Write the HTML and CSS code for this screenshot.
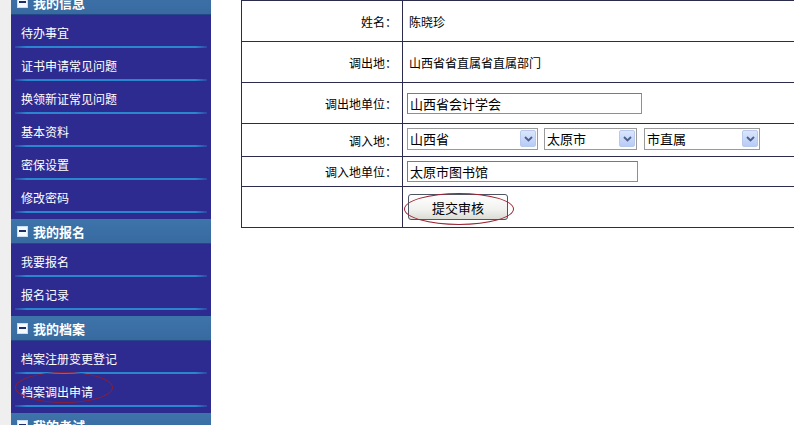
FILE: index.html
```html
<!DOCTYPE html>
<html lang="zh-CN">
<head>
<meta charset="utf-8">
<title>档案调出申请</title>
<link rel="stylesheet" href="styles.css">
</head>
<body>
<div class="page">
  <aside class="sidebar">
    <div class="group">
      <div class="group-head"><span class="minus"></span>我的信息</div>
      <a class="item">待办事宜</a>
      <a class="item">证书申请常见问题</a>
      <a class="item">换领新证常见问题</a>
      <a class="item">基本资料</a>
      <a class="item">密保设置</a>
      <a class="item">修改密码</a>
    </div>
    <div class="group">
      <div class="group-head"><span class="minus"></span>我的报名</div>
      <a class="item">我要报名</a>
      <a class="item">报名记录</a>
    </div>
    <div class="group">
      <div class="group-head"><span class="minus"></span>我的档案</div>
      <a class="item">档案注册变更登记</a>
      <a class="item item-marked">档案调出申请<span class="ring ring-side"></span></a>
    </div>
    <div class="group">
      <div class="group-head"><span class="minus"></span>我的考试</div>
    </div>
  </aside>

  <main class="content">
    <div class="form">
      <div class="label">姓名：</div>
      <div class="value"><span class="text">陈晓珍</span></div>

      <div class="label">调出地：</div>
      <div class="value"><span class="text">山西省省直属省直属部门</span></div>

      <div class="label">调出地单位：</div>
      <div class="value"><span class="input input-wide">山西省会计学会</span></div>

      <div class="label">调入地：</div>
      <div class="value selects">
        <span class="select sel-1"><span class="sel-text">山西省</span><span class="arrow"><svg width="9" height="6" viewBox="0 0 9 6"><path d="M1 1 L4.5 4.5 L8 1" fill="none" stroke="#4a5f8c" stroke-width="1.8"/></svg></span></span>
        <span class="select sel-2"><span class="sel-text">太原市</span><span class="arrow"><svg width="9" height="6" viewBox="0 0 9 6"><path d="M1 1 L4.5 4.5 L8 1" fill="none" stroke="#4a5f8c" stroke-width="1.8"/></svg></span></span>
        <span class="select sel-3"><span class="sel-text">市直属</span><span class="arrow"><svg width="9" height="6" viewBox="0 0 9 6"><path d="M1 1 L4.5 4.5 L8 1" fill="none" stroke="#4a5f8c" stroke-width="1.8"/></svg></span></span>
      </div>

      <div class="label">调入地单位：</div>
      <div class="value"><span class="input input-mid">太原市图书馆</span></div>

      <div class="label"></div>
      <div class="value">
        <span class="btn-wrap"><button class="btn" type="button">提交审核</button><span class="ring ring-btn"></span></span>
      </div>
    </div>
  </main>
</div>
</body>
</html>
```

FILE: styles.css
```css
html, body {
  margin: 0;
  padding: 0;
  background: #ffffff;
  overflow: hidden;
}

body {
  font-family: "Noto Sans CJK SC", "Liberation Sans", sans-serif;
  font-size: 12px;
  color: #000;
}

.page {
  display: flex;
  align-items: flex-start;
  gap: 30px;
  width: 794px;
  height: 443px;
}

/* ---------- sidebar ---------- */
.sidebar {
  width: 200px;
  height: 435px;
  margin-top: -10px;
  border-left: 11px solid #efefef;
  background: #2e2b90;
  overflow: hidden;
  flex: none;
}

.group {
  display: flex;
  flex-direction: column;
  padding-bottom: 6px;
}

.group-head {
  height: 25px;
  box-sizing: border-box;
  display: flex;
  align-items: center;
  gap: 5px;
  padding-left: 6px;
  background: linear-gradient(#3d74aa, #386aa0);
  border-bottom: 1px solid #24478a;
  color: #ffffff;
  font-weight: bold;
  font-size: 13px;
}

.minus {
  width: 11px;
  height: 11px;
  box-sizing: border-box;
  background: #f4f8ff;
  border: 1px solid #c8dcf4;
  display: flex;
  align-items: center;
  justify-content: center;
}

.minus::before {
  content: "";
  width: 7px;
  height: 2px;
  background: #1d2d6a;
}

.item {
  position: relative;
  display: block;
  height: 33px;
  box-sizing: border-box;
  padding: 4px 0 0 10px;
  line-height: 27px;
  color: #ffffff;
  font-size: 12px;
  text-decoration: none;
  background: linear-gradient(to right, rgba(40,130,205,0.3), #2b86d0 6%, #2b86d0 94%, rgba(40,130,205,0.3)) no-repeat 4px 31px / 192px 2px;
}

.ring {
  position: absolute;
  border: 1px solid #9c2433;
  border-radius: 50%;
  pointer-events: none;
}

.ring-side {
  left: 4px;
  top: -2px;
  width: 96px;
  height: 29px;
  border-color: #8a1e34;
}

/* ---------- form ---------- */
.content {
  flex: none;
  width: 553px;
}

.form {
  display: grid;
  grid-template-columns: 162px 1fr;
  grid-template-rows: 41px 41px 41px 33px 30px 41px;
  border-top: 1px solid #2b2b4d;
}

.label, .value {
  box-sizing: border-box;
  border-bottom: 1px solid #2b2b4d;
  display: flex;
  align-items: center;
}

.label {
  border-left: 1px solid #2b2b4d;
  border-right: 1px solid #2b2b4d;
  justify-content: flex-end;
  padding-right: 5px;
}

.value {
  padding-left: 4px;
}

.text {
  padding-left: 2px;
}

.input {
  height: 21px;
  box-sizing: border-box;
  border: 1px solid #8f8f8f;
  border-top-color: #7a7a7a;
  border-left-color: #7a7a7a;
  padding: 0 2px;
  font-size: 13px;
  line-height: 19px;
  background: #fff;
}

.input-wide { width: 235px; }
.input-mid { width: 231px; }

.selects {
  gap: 6px;
  padding-bottom: 3px;
}

.select {
  height: 22px;
  box-sizing: border-box;
  border: 1px solid #9a9a9a;
  display: flex;
  align-items: center;
  justify-content: space-between;
  padding: 0 1px 0 2px;
  background: #fff;
  font-size: 13px;
}

.sel-1 { width: 131px; }
.sel-2 { width: 93px; }
.sel-3 { width: 116px; margin-left: 1px; }

.arrow {
  width: 16px;
  height: 17px;
  box-sizing: border-box;
  border: 1px solid #b8c9ee;
  border-radius: 2px;
  background: linear-gradient(#dbe6fd, #b7cbf5);
  display: flex;
  align-items: center;
  justify-content: center;
}

.btn-wrap {
  position: relative;
  display: inline-flex;
  margin-left: 1px;
}

.btn {
  width: 100px;
  height: 26px;
  box-sizing: border-box;
  border: 1px solid #4b5662;
  border-radius: 3px;
  background: linear-gradient(#ffffff, #f1f1ee 60%, #dcdcd6);
  font-family: "Noto Sans CJK SC", "Liberation Sans", sans-serif;
  font-size: 13px;
  color: #000;
  padding: 0;
}

.ring-btn {
  left: -4px;
  top: -1px;
  width: 108px;
  height: 30px;
}
```
